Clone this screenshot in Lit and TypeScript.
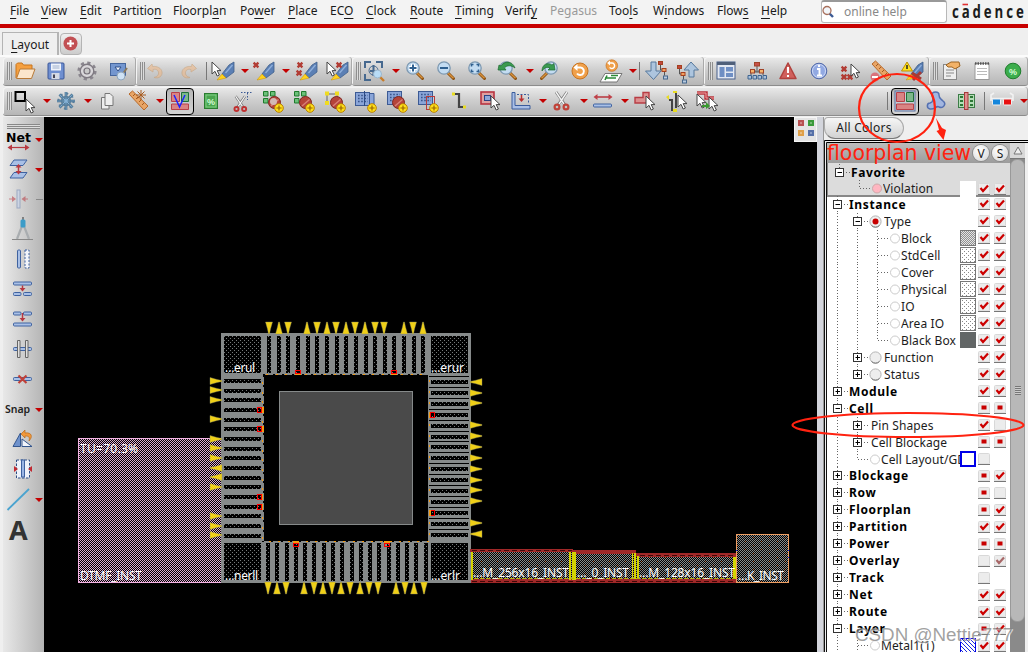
import { LitElement, html, svg, css } from "lit";
import { customElement, property } from "lit/decorators.js";

/* ---------- shared glyph parts, drawn in a 30x28 box ---------- */
const cursor = (x = 0, y = 0) => svg`<path transform="translate(${x} ${y})" d="M0 0V12L3 9.3L5.2 14L7.4 13L5.2 8.6H9Z" fill="#fff" stroke="#444" stroke-width="1"/>`;
const redX = (x: number, y: number, s = 1) => svg`<path transform="translate(${x} ${y}) scale(${s})" d="M-2.4-2.4L2.4 2.4M2.4-2.4L-2.4 2.4" stroke="#b23c34" stroke-width="2.3"/>`;
const pencil = svg`<path d="M24 5V15L16 21L12 17L19 8Z" fill="#5b7fb4" stroke="#3f5f8c" stroke-width=".8"/><path d="M22.500 8L15.500 16" stroke="#8fb0dc" stroke-width="1.300"/><path d="M12 17L16 21L12 22L7 23Z" fill="#ffd21e" stroke="#c89000" stroke-width=".5"/>`;
const lens = (inner: unknown) => svg`<path d="M17 16L22.500 21.500" stroke="#8a5010" stroke-width="3" stroke-linecap="round"/><path d="M17 16L22.500 21.300" stroke="#d8913c" stroke-width="1.400"/><circle cx="13" cy="11" r="6.200" fill="#c3dcf2" stroke="#7d98b0" stroke-width="1.300"/>${inner}`;
const plusBadge = svg`<circle cx="21" cy="21" r="4.300" fill="#ffe01a" stroke="#b98000" stroke-width="1"/><path d="M21 18.400V23.600M18.400 21H23.600" stroke="#9a6500" stroke-width="1.200"/>`;
const ball = svg`<circle cx="16.500" cy="15.500" r="6" fill="#b5443a" stroke="#7c2620" stroke-width="1"/><path d="M13 19L20.500 12.500" stroke="#d98078" stroke-width="1.400"/>`;
const greens = svg`<g fill="#6cc07a" stroke="#1f7a2c"><path d="M5.500 4.500h4.500v4.500h-4.500zM12.500 4.500h4.500v4.500h-4.500zM5.500 11.500h4.500v4.500h-4.500z"/></g>`;
const chipBlue = svg`<rect x="5.500" y="4.500" width="14" height="13" fill="#8aa5d8" stroke="#3c5a94"/><path d="M8 7.500H18M8 10.500H18M8 13.500H18" stroke="#39558c" stroke-width="1.600" stroke-dasharray="1.600 1.600"/>`;
const rulerBody = svg`<path d="M5 5L8.500 2L24 17L20 21Z" fill="#e8a566" stroke="#b8692a"/><path d="M9 7L11 5M12 10L14 8M15 13L17 11M18 16L20 14" stroke="#a35a20"/>`;
const panes = svg`<rect x="6" y="5" width="18" height="18" fill="#c8cdd4"/><path d="M6.500 5.500H14.500V14.500H6.500ZM6.500 17H23.500V22.500H6.500Z" fill="#d98484" stroke="#b84048"/><path d="M16.500 5.500H23.500V14.500H16.500Z" fill="#7db88c" stroke="#20703a"/>`;
const nodes = svg`<g fill="#f2a060" stroke="#a6401e"><rect x="16.500" y="4.500" width="4" height="3" fill="#c04840"/><rect x="20" y="11.500" width="4" height="3"/><rect x="21.500" y="19" width="4" height="3" fill="#b9cbe0" stroke="#44678c"/></g><path d="M18.500 8V13H20M22.500 15V18.500" fill="none" stroke="#555"/>`;
const bar = (y: number) => svg`<rect x="5.500" y="${y}" width="18" height="3" rx="1" fill="#a9c0e6" stroke="#3f62a0"/>`;
const halfBars = (y: number) => svg`<rect x="5.500" y="${y}" width="7.500" height="3" rx="1" fill="#a9c0e6" stroke="#3f62a0"/><rect x="15.500" y="${y}" width="8" height="3" rx="1" fill="#a9c0e6" stroke="#3f62a0"/>`;
const scissors = (b: string) => svg`<path d="M9 5L18 18M20 5L11 18" stroke="#777" stroke-width="2.800"/><path d="M9 5L17 17M20 5L12 17" stroke="#f4f4f4" stroke-width="1.400"/><g fill="none" stroke="${b}" stroke-width="2.200"><circle cx="10" cy="20" r="2.400"/><circle cx="19" cy="20" r="2.400"/></g>`;
const swirl = (c: string) => svg`<path d="M10 7L5.500 11.500L11 15V12.500C15 11.500 17 14 16.500 17C16 19 14 20 12 20.500C17 22 20.500 19 20 15C19.500 11 15 9 10.500 9.500Z" fill="${c}" stroke="#c79a6c" stroke-width=".8"/>`;
const roundArrow = svg`<circle cx="15" cy="14" r="8" fill="#f0a04a" stroke="#c87420"/><path d="M11 10.500H15.500A3.800 3.800 0 1 1 12 16.500" fill="none" stroke="#fff" stroke-width="2"/><path d="M8.500 10.500L12.500 7V14Z" fill="#fff"/>`;

const ICONS: Record<string, unknown> = {
  open: svg`<path d="M6 21V7.500L7.500 6H12L13.500 8H22V12" fill="#f5a040" stroke="#c8741c"/><path d="M6.500 21.500L10 12H25L21.500 21.500Z" fill="#fbe6cc" stroke="#b87a38"/>`,
  save: svg`<rect x="7" y="6" width="16" height="16" rx="1" fill="#6f8fd0" stroke="#3a5698"/><rect x="10" y="6.500" width="10" height="7" fill="#eef2fa"/><path d="M11.500 9H18.500M11.500 11H18.500" stroke="#9fb0cc"/><rect x="10.500" y="16" width="8" height="6" fill="#d5dae5"/><rect x="12" y="17.500" width="2" height="3.500" fill="#445"/>`,
  gear: svg`<circle cx="15" cy="14" r="8.300" fill="none" stroke="#8a868e" stroke-width="2.600" stroke-dasharray="3.200 3.320"/><circle cx="15" cy="14" r="6.800" fill="#d9d7da" stroke="#7f7a82" stroke-width="1.400"/><circle cx="15" cy="14" r="3" fill="#c9c9c9" stroke="#77727a" stroke-width="1.200"/>`,
  design: svg`<rect x="7.500" y="6.500" width="15" height="12" fill="#7396cf" stroke="#45669e"/><path d="M12 10H18L15 14Z" fill="#f4f8ff" stroke="#2e4f88"/><path d="M19 18L24 11" stroke="#8c7a5c" stroke-width="2"/><circle cx="18" cy="19" r="4" fill="#cfe2f5" stroke="#8fa6bd"/>`,
  undo: svg`<g opacity=".6">${swirl("#eeb98a")}</g>`,
  redo: svg`<g opacity=".6" transform="translate(29 0) scale(-1 1)">${swirl("#eeb98a")}</g>`,
  pick: svg`<g transform="translate(2 0)">${pencil}</g>${cursor(4, 5)}`,
  unpick: svg`<g transform="translate(1 0)">${pencil}</g>${redX(7, 8)}`,
  unpick2: svg`<g transform="translate(2 0)">${pencil}</g>${redX(9, 8)}${redX(8, 16)}`,
  pickx: svg`<g transform="translate(2 0)">${pencil}</g>${cursor(5, 5)}${redX(17, 8)}`,
  fit: svg`<path d="M6 11V5H12M17 5H23V11M6 17V23H12M11 14H18M14.500 8V19" fill="none" stroke="#47698f" stroke-width="2"/><circle cx="14.500" cy="13.500" r="4.500" fill="none" stroke="#47698f"/><path d="M20 19L25 24" stroke="#c87c28" stroke-width="2.400"/><circle cx="18.500" cy="17" r="4" fill="#b8dcf6" stroke="#9cb6cc"/>`,
  zin: lens(svg`<path d="M13 7V15M9 11H17" stroke="#fff" stroke-width="4"/><path d="M13 7.500V14.500M9.500 11H16.500" stroke="#2f6090" stroke-width="2"/>`),
  zout: lens(svg`<path d="M9 11H17" stroke="#2f6090" stroke-width="2.200"/>`),
  zsel: lens(svg`<path d="M9.500 9.500V7.500H11.500M14.500 7.500H16.500V9.500M9.500 12.500V14.500H11.500M14.500 14.500H16.500V12.500" fill="none" stroke="#2f6090" stroke-width="1.500"/>`),
  zprev: svg`${lens(svg``)}<path d="M10 13L5 13L6 8L8 9C11 4 19 3 22 11C18 8 14 8 11.500 11L13 13Z" fill="#3a9a50" stroke="#1e6a30" stroke-width=".7"/>`,
  znext: svg`<g transform="translate(30 0) scale(-1 1)">${lens(svg``)}</g><path d="M8 14C8 7 14 5 18 8L20 6.500L21 13L14 13L16 11C13 9.500 10 11 8 14Z" fill="#3a9a50" stroke="#1e6a30" stroke-width=".7"/>`,
  refresh: roundArrow,
  redraw: svg`<path d="M9 16.500H26L21 25H4Z" fill="#fff" stroke="#777"/><path d="M11 18.500L9 23M15 18.500H22M9 21H20" stroke="#2e8a3a" stroke-width="1.600"/><g transform="translate(5 -1.500) scale(.72)">${roundArrow}</g>`,
  down: svg`<path d="M9 5H14V14H19L11.500 22.500L3.500 14H9Z" fill="#adc5de" stroke="#56789c"/>${nodes}`,
  up: svg`<path d="M16 20H21V13H25.500L18 5L11 13H16Z" fill="#adc5de" stroke="#56789c"/><g transform="translate(-12 4)">${nodes}</g>`,
  layout: svg`<rect x="6" y="5" width="18" height="17" fill="#e3e8f2" stroke="#48608c"/><rect x="6" y="5" width="18" height="3" fill="#50607a"/><path d="M8.500 10H13.500V20H8.500ZM15 10H22V14.500H15ZM15 16H22V20H15Z" fill="#6f8fc4"/>`,
  tree: svg`<path d="M15 9V13M9 18V15H21V18M9 14H21" stroke="#555" fill="none"/><g stroke="#a14428"><rect x="12.500" y="5.500" width="5" height="3.500" fill="#c85048"/><rect x="8.500" y="12.500" width="4" height="3.500" fill="#f4b46c"/><rect x="17.500" y="12.500" width="4" height="3.500" fill="#f4b46c"/></g><path d="M6 18.500h3.500v3.500h-3.500zM11 18.500h3.500v3.500h-3.500zM16 18.500h3.500v3.500h-3.500zM21 18.500h3.500v3.500h-3.500z" fill="#a9c0da" stroke="#3e6490"/>`,
  warn: svg`<path d="M15 6L23 21.500H7Z" fill="#d0605c" stroke="#b0423e" stroke-width="1.500" stroke-linejoin="round"/><path d="M15 10V16M15 18V20" stroke="#fff" stroke-width="2"/>`,
  info: svg`<circle cx="15" cy="14" r="7.800" fill="#92a9e2" stroke="#5068a8"/><circle cx="15" cy="14" r="6.500" fill="none" stroke="#cfdaf6"/><path d="M13 12H15.500V18M13 18.500H18M15 8V10" stroke="#fff" stroke-width="1.900" fill="none"/>`,
  xsel: svg`${redX(9, 12)}${redX(9, 20)}${redX(15, 20)}${cursor(16, 7)}`,
  unrule: svg`<g transform="translate(1 2)">${rulerBody}</g><circle cx="9" cy="20" r="4.500" fill="#d8737c"/><rect x="6" y="19" width="6" height="2" fill="#fff"/>`,
  wpen: svg`<g transform="translate(2 0)">${pencil}</g><path d="M15 16L24 22M24 15L16 23" stroke="#a83a34" stroke-width="3"/><path d="M10 5L15.500 14H4.500Z" fill="#ffe21c" stroke="#c09000"/><path d="M10 8V12" stroke="#222" stroke-width="1.500"/>`,
  props: svg`<rect x="7.500" y="7.500" width="13" height="15" fill="#eee" stroke="#888"/><path d="M10 13H18M10 16H18M10 19H15" stroke="#888"/><path d="M10 8L15 5H23L24 9L19 12L16 10H12Z" fill="#f2b268" stroke="#9c6422"/>`,
  note: svg`<rect x="8" y="6.500" width="14" height="16" fill="#fff" stroke="#999"/><path d="M8 6.500H22" stroke="#555" stroke-width="2.500" stroke-dasharray="1.500 1"/><path d="M10 11.500H20M10 14.500H20M10 17.500H20" stroke="#bbb"/>`,
  pct: svg`<circle cx="15" cy="14" r="7.800" fill="#3cad4c" stroke="#1d7c2c"/><text x="11" y="17.500" class="pc">%</text>`,
  select: svg`<rect x="5.500" y="5" width="9.500" height="9" fill="none" stroke="#000" stroke-width="2"/>${cursor(16, 12)}`,
  flake: svg`<g stroke="#3b627f" stroke-width="2.600"><path d="M15 5V23M6 14H24M8.500 7.500L21.500 20.500M21.500 7.500L8.500 20.500"/></g><g stroke="#86b2d6" stroke-width="1.100"><path d="M15 5V23M6 14H24M8.500 7.500L21.500 20.500M21.500 7.500L8.500 20.500"/></g><g fill="none" stroke="#587f9d" stroke-width="1.300"><circle cx="15" cy="14" r="4.500"/><circle cx="15" cy="14" r="7.500" stroke-dasharray="2 3.900" stroke-width="2"/></g>`,
  copy: svg`<path d="M9.500 10.500H17V22H9.500Z" fill="#eee" stroke="#777"/><path d="M13 6.500H18L21 9.500V18.500H13Z" fill="#eee" stroke="#777"/>`,
  ruler: svg`<g transform="translate(1 2)">${rulerBody}</g><path d="M18 3V13M13 8H23M14.500 4.500L21.500 11.500M21.500 4.500L14.500 11.500" stroke="#a85c20"/>`,
  panesV: svg`${panes}<path d="M9 8L14.500 20L20 8" fill="none" stroke="#1a22ff" stroke-width="1.500"/>`,
  pctSq: svg`<rect x="8.500" y="6.500" width="13" height="15" fill="#4aa54e" stroke="#2a7c30"/><rect x="10" y="8" width="10" height="12" fill="none" stroke="#7fd083"/><text x="11" y="17.500" class="pc">%</text>`,
  cut: svg`<path d="M14 5.500H25M20.500 6V13" stroke="#3c5a94" stroke-dasharray="1.500 1.500" fill="none"/><g transform="translate(1 5) scale(.85)">${scissors("#c03030")}</g>`,
  g1: svg`${greens}${ball}<circle cx="15.500" cy="14.500" r="3.500" fill="#d3b8b4"/>${plusBadge}`,
  g2: svg`${greens}${ball}${plusBadge}`,
  g3: svg`<path d="M7 7H17V16M7 7V16" fill="none" stroke="#666"/><path d="M5 4.500h4v4h-4zM15 4.500h4v4h-4zM5 14h4v4h-4z" fill="#f0dc20"/>${ball}${plusBadge}`,
  c1: svg`<g transform="translate(-1 1)">${chipBlue}</g><path d="M19 6.500H23V17.500H19" stroke="#3c5a94" fill="#8aa5d8"/><path d="M13.500 4V19" stroke="#2c4a84"/>${plusBadge}`,
  c2: svg`${chipBlue}${ball}${plusBadge}`,
  c3: svg`${chipBlue}<rect x="13.500" y="9.500" width="8" height="13" fill="none" stroke="#b83c3c"/>${plusBadge}`,
  wire: svg`<path d="M10 7H15V20H20" fill="none" stroke="#444" stroke-width="2.200"/><path d="M8 5.500h3v3h-3zM19 18.500h3v3h-3z" fill="#e8dc20"/>`,
  rsel: svg`<rect x="6" y="5" width="13" height="12" fill="#dfa0a0" stroke="#b83440" stroke-width="1.600"/><rect x="9.500" y="8.500" width="6" height="5" fill="#8fa6d8" stroke="#2b4484"/>${cursor(16, 9)}`,
  edge: svg`<path d="M6 5.500H9V18.500H24V22H6Z" fill="#a9bfe6" stroke="#3a5c9c"/><path d="M11 7.500H22.500V17" fill="none" stroke="#3a5c9c" stroke-dasharray="2 1.500"/><path d="M15.500 8V12" stroke="#b83030" stroke-width="1.500"/><path d="M12.500 11.500H18.500L15.500 15Z" fill="#b83030"/>`,
  scis: scissors("#c04238"),
  space: svg`<path d="M7 10H23" stroke="#b8343c" stroke-width="1.500"/><path d="M9.500 7V13L5.500 10ZM20.500 7V13L24.500 10Z" fill="#c04048"/>${bar(17)}`,
  poly: svg`<path d="M13 5.500H19V16H5V10.500H13Z" fill="#dc9090" stroke="#b83c44" stroke-width="1.400"/>${cursor(16, 9)}`,
  wsel: svg`<path d="M8 13H11V23H15M15 6V21" fill="none" stroke="#444" stroke-width="2"/><path d="M5 10L8 8V13ZM12 4h4v2h-4zM12 22h4v3h-4z" fill="#e8dc20"/>${cursor(17, 8)}`,
  rtsel: svg`<path d="M5 6H14V11H22" fill="none" stroke="#b8343c" stroke-width="3.500"/><path d="M5 6H14V11H22" fill="none" stroke="#f0a0a0" stroke-width="1"/>${cursor(5, 7)}${cursor(17, 10)}<path d="M10 18H14V15L18 19L14 22V20H10Z" fill="#3a9a30"/>`,
  panes: svg`<rect x="5" y="4" width="20" height="20" fill="#c9d1dd" stroke="#5870a0"/>${panes}`,
  blob: svg`<path d="M11 8C11 4 18 4 18 8C18 12 20 12 22 14C26 17 22 22 18 20C15 18 14 23 9 22C5 21 6 16 9 16C13 15 12 11 11 8Z" fill="#a2b6e0" stroke="#5470b0" stroke-width="1.500"/>`,
  cols: svg`<rect x="6.500" y="7.500" width="16" height="13" fill="#b5ddb8" stroke="#3c7c46"/><path d="M9.500 9V19M19.500 9V19" stroke="#2d7836" stroke-width="3" stroke-dasharray="2 2"/><rect x="12.500" y="5.500" width="3.500" height="17" fill="#dd9090" stroke="#a83838"/>`,
  glasses: svg`<path d="M4 14V8L7 6M26 14V8L23 6M4 11.500H26" fill="none" stroke="#f2f2f2" stroke-width="1.600"/><rect x="5.500" y="12" width="8" height="6" rx="1" fill="#1486dc" stroke="#eee"/><rect x="16.500" y="12" width="8" height="6" rx="1" fill="#e81010" stroke="#eee"/>`,
  net: svg`<text x="1" y="17" class="netT">Net</text><path d="M5 22.500H22" stroke="#b83840" stroke-width="1.200"/><path d="M7 19.500V25.500L2.500 22.500ZM20 19.500V25.500L24.500 22.500Z" fill="#b83840"/>`,
  layers: svg`<path d="M9 5H22L18 10.500H5Z M9 17.500H22L18 23H5Z" fill="#a9c0e6" stroke="#3f62a0"/><path d="M13.500 11V18" stroke="#b83840" stroke-width="1.500"/><path d="M10.500 12.500L13.500 9L16.500 12.500ZM10.500 16L13.500 19.500L16.500 16Z" fill="#b83840"/>`,
  squeeze: svg`<g opacity=".55"><rect x="12" y="5" width="3" height="18" fill="#c6d4ee" stroke="#6e86b4"/><path d="M4 14H8M19 14H23" stroke="#b83840"/><path d="M7 11V17L11 14ZM20.500 11V17L16.500 14Z" fill="#b83840"/></g>`,
  compass: svg`<path d="M17 11L12 24M19 11L24 24" stroke="#a9adb0" stroke-width="2.200"/><path d="M7 24.500H28" stroke="#888"/><path d="M18 2V5" stroke="#666" stroke-width="1.500"/><rect x="15.500" y="4.500" width="5" height="8" rx="1.500" fill="#3c9cc8"/>`,
  vbars: svg`<rect x="12.500" y="5" width="3" height="18" rx="1" fill="#a9c0e6" stroke="#3f62a0"/><rect x="20" y="5" width="4" height="18" fill="#f2f5fb" stroke="#3f62a0" stroke-dasharray="2 1.500"/>`,
  split1: svg`<g transform="translate(3 0)">${bar(7)}${halfBars(17.5)}<path d="M14.500 10.500V14" stroke="#b83840" stroke-width="1.500"/><path d="M11.500 13H17.500L14.500 16.500Z" fill="#b83840"/></g>`,
  split2: svg`<g transform="translate(3 0)">${halfBars(7)}${bar(18)}<path d="M14.500 8V14" stroke="#b83840" stroke-width="1.500"/><path d="M11.500 13H17.500L14.500 16.500Z" fill="#b83840"/></g>`,
  cross: svg`<g transform="translate(3 0)">${bar(12.5)}<path d="M9.500 5.500h2.500v17h-2.500zM17.500 5.500h2.500v17h-2.500z" fill="#e0e0e0" stroke="#666"/></g>`,
  del: svg`<g transform="translate(3 0)">${bar(12.5)}<path d="M10.500 10.500L18.500 18M18.500 10.500L10.500 18" stroke="#c04038" stroke-width="2.200"/></g>`,
  snap: svg`<text x="0" y="18" class="snapT">Snap</text>`,
  mirror: svg`<path d="M8 21.500H15.500V8Z" fill="#6f92cc" stroke="#34568e"/><path d="M17 14L27 21.500H17Z" fill="#f2f5fb" stroke="#34568e"/><path d="M16 9L20 5V8C27 7 28 12 24 16C25 12 24 11 20 11V13Z" fill="#f0983c" stroke="#b86a1c" stroke-width=".7"/>`,
  stretch: svg`<rect x="11.500" y="5" width="13" height="18" fill="#eef2fa" stroke="#2f4f86" stroke-dasharray="2.500 1.500"/><rect x="16.500" y="5" width="3" height="17" fill="#9bb6e4" stroke="#3f62a0"/><path d="M9 11V17L13 14ZM27 11V17L23 14Z" fill="#c02830"/>`,
  line: svg`<path d="M2.500 25L24 4" stroke="#4aa3cf" stroke-width="1.800"/>`,
  textA: svg`<text x="4" y="25" class="bigA">A</text>`,
};

@customElement("tool-icon")
class ToolIcon extends LitElement {
  @property() name = "";
  static styles = css`
    :host { display: block; width: 31px; height: 28px; flex: none; }
    svg { display: block; width: 30px; height: 28px; overflow: visible; }
    .pc { font: bold 9px "Liberation Sans", sans-serif; fill: #d9ffd9; }
    .netT { font: bold 12.5px "DejaVu Sans", sans-serif; fill: #000; }
    .snapT { font: 600 10.5px "Noto Sans", sans-serif; fill: #222; }
    .bigA { font: bold 27px "Noto Sans", sans-serif; fill: #333; }
  `;
  render() {
    return html`<svg viewBox="0 0 30 28">${ICONS[this.name]}</svg>`;
  }
}

/* "v" is a drop-down arrow, "|" a separator, a leading "*" marks a pressed tool */
const BAR1 = [
  { w: 132.5, items: "open save gear design" },
  { w: 216.5, items: "undo redo | pick v unpick v unpick2 pickx" },
  { w: 352, items: "fit v zin zout zsel zprev v znext refresh redraw v | down up" },
  { w: 225, items: "layout tree warn info xsel unrule wpen" },
  { w: 99, items: "props note pct" },
];
const BAR2 = "select v flake v copy ruler v *panesV pctSq cut g1 g2 g3 c1 c2 c3 wire rsel edge v scis v space v poly wsel rtsel > | *panes blob cols | glasses v";

@customElement("tool-group")
class ToolGroup extends LitElement {
  @property() items = "";
  static styles = css`
    :host { display: flex; align-items: center; height: 29px; box-sizing: border-box; overflow: hidden; background: linear-gradient(#eaeaea, #cfcfcf 45%, #b6b6b6); border-bottom: 1px solid #8c8c8c; border-radius: 3px; box-shadow: inset -1px 0 #aaa, inset 1px 1px #f4f4f4; }
    .grip { flex: none; width: 5px; height: 18px; margin: 0 -2.5px 0 4px; background: repeating-linear-gradient(90deg, #8e8e8e 0 1px, #dcdcdc 1px 2px); }
    .tri { flex: none; width: 0; border: 4px solid transparent; border-top-color: #c40000; border-bottom: 0; margin: 0 .4px 0 2px; }
    .sep { flex: none; width: 1px; height: 18px; background: #777; margin: 0 1.5px; }
    .on { flex: none; margin: 0 2px 0 1px; width: 26px; height: 25px; border: 1px solid #000; border-radius: 4px; background: linear-gradient(#b5b5b5, #d4d4d4); display: flex; justify-content: center; align-items: center; }
    .on tool-icon { margin-right: -1px; }
    .grow { flex: 1; }
  `;
  render() {
    return html`<div class="grip"></div>${this.items.split(" ").map((n) =>
      n === "v" ? html`<div class="tri"></div>`
      : n === "|" ? html`<div class="sep"></div>`
      : n === ">" ? html`<div class="grow"></div>`
      : n[0] === "*" ? html`<div class="on"><tool-icon name=${n.slice(1)}></tool-icon></div>`
      : html`<tool-icon name=${n}></tool-icon>`)}`;
  }
}

/* ---------- floorplan canvas ---------- */
const range = (n: number, from: number, step: number) => Array.from({ length: n }, (_, i) => from + i * step);
const TOP = range(17, 269, 9.65);
const BOT = range(18, 268, 9.28);
const LEFT = range(17, 381, 9.67);
const RIGHT = range(15, 382, 10.9);
const pinV = (x: number, y: number, down: boolean) => down
  ? svg`<path d="M${x - 3.5} ${y}h7l-2 7l-1 5h-1l-1-5z" class="pin"/>`
  : svg`<path d="M${x - 0.5} ${y}h1l1 5l2 7h-7l2-7z" class="pin"/>`;
const pinH = (x: number, y: number, right: boolean) => right
  ? svg`<path d="M${x} ${y - 3.5}v7l7-2l5-1v-1l-5-1z" class="pin"/>`
  : svg`<path d="M${x + 12} ${y - 3.5}v7l-7-2l-5-1v-1l5-1z" class="pin"/>`;
const TOP_PINS = "269d 279u 288d 307u 317d 327u 336d 346u 355d 365u 375d 384d 404u 413d 423u";
const BOT_PINS = "268d 277u 286d 304u 314d 323u 332d 341u 350d 360u 369d 378d 396u 405d 414u 424d";
const LEFT_PINS = "381r 390r 400r 419r 439r 448r 458r 468l 477l 487r 516r 526r 535r";
const RIGHT_PINS = "382l 393r 403r 425r 436r 447r 458r 469r 480r 490r 501r 523r 534l";
const pins = (s: string, f: (n: number, d: string) => unknown) => s.split(" ").map((p) => f(parseInt(p), p.slice(-1)));

@customElement("floor-canvas")
class FloorCanvas extends LitElement {
  static styles = css`
    :host { display: block; width: 773px; background: #000; }
    svg { display: block; width: 773px; height: 535px; }
    .crisp { shape-rendering: crispEdges; }
    .pin { fill: #f0d018; stroke: #8a8a60; stroke-width: .4; }
    text { font: 12px "Noto Sans", sans-serif; fill: #fff; }
  `;
  render() {
    return html`<svg viewBox="44 117 773 535">
      <defs>
        <pattern id="pink" width="2" height="2" patternUnits="userSpaceOnUse"><path d="M0 0h1v1h-1zM1 1h1v1h-1z" fill="#dcaad0" class="crisp"/></pattern>
        <pattern id="gray" width="2" height="2" patternUnits="userSpaceOnUse"><path d="M0 0h1v1h-1zM1 1h1v1h-1z" fill="#868a8a" class="crisp"/></pattern>
        <pattern id="dots" width="4" height="4" patternUnits="userSpaceOnUse"><rect width="4" height="4" fill="#000"/><path d="M0 0h1v1h-1zM2 2h1v1h-1z" fill="#767a7a" class="crisp"/></pattern>
        <pattern id="rust" width="16" height="8" patternUnits="userSpaceOnUse"><path d="M1 1h1v1h-1zM9 5h1v1h-1z" fill="#c07040" class="crisp"/></pattern>
      </defs>
      <g class="crisp">
        <rect x="78" y="438" width="145" height="145" fill="url(#pink)"/>
        <rect x="78.500" y="438.500" width="144" height="144" fill="none" stroke="#f5b4e4"/>
        <rect x="221" y="333" width="250" height="250" fill="#868a8a"/>
        <rect x="264" y="375" width="164" height="166" fill="#000"/>
        ${[[224, 336], [431, 336], [224, 543], [431, 543]].map(([x, y]) => svg`<rect x=${x} y=${y} width="37" height="37" fill="url(#dots)"/>`)}
        ${TOP.map((x) => svg`<rect x=${Math.round(x) - 2} y="336" width="4" height="37" fill="url(#dots)"/><rect x=${Math.round(x) - 6} y="374" width="2" height="1" fill="#000"/><rect x=${Math.round(x) - 3} y="374" width="2" height="1" fill="#f59a10"/>`)}
        ${BOT.map((x) => svg`<rect x=${Math.round(x) - 2} y="543" width="4" height="38" fill="url(#dots)"/><rect x=${Math.round(x) - 6} y="541" width="2" height="1" fill="#000"/><rect x=${Math.round(x) + 1} y="541" width="2" height="1" fill="#f59a10"/>`)}
        ${LEFT.map((y) => svg`<rect x="224" y=${Math.round(y) - 2} width="37" height="4" fill="url(#dots)"/><rect x="263" y=${Math.round(y) - 6} width="1" height="2" fill="#000"/><rect x="262" y=${Math.round(y) + 1} width="1" height="2" fill="#f59a10"/>`)}
        ${RIGHT.map((y) => svg`<rect x="431" y=${Math.round(y) - 2} width="37" height="4" fill="url(#dots)"/><rect x="429" y=${Math.round(y) - 6} width="40" height="1" fill="#000"/><rect x="429" y=${Math.round(y) - 2} width="1" height="2" fill="#f59a10"/>`)}
        <g fill="none" stroke="#f00">
          <rect x="295.500" y="370.500" width="5" height="3"/><rect x="391.500" y="370.500" width="5" height="3"/>
          <rect x="293.500" y="543.500" width="5" height="3"/><rect x="384.500" y="543.500" width="5" height="3"/>
          <rect x="257.500" y="407.500" width="4" height="5"/><rect x="257.500" y="426.500" width="4" height="5"/>
          <rect x="257.500" y="494.500" width="4" height="5"/><rect x="257.500" y="504.500" width="4" height="5"/>
          <rect x="430.500" y="412.500" width="4" height="5"/><rect x="430.500" y="510.500" width="4" height="5"/>
        </g>
        <path d="M295 374h6v1h-6zM391 374h6v1h-6zM293 541h6v2h-6zM384 541h6v2h-6zM262 407h2v6h-2zM262 426h2v6h-2zM262 494h1v6h-1zM262 504h1v6h-1zM429 412h1v6h-1zM429 510h2v6h-2z" fill="#f59a10"/>
        <rect x="279.500" y="391.500" width="133" height="133" fill="#4a4a4a" stroke="#868a8a"/>

        <rect x="471" y="552" width="265" height="28" fill="url(#gray)"/><rect x="471" y="552" width="265" height="28" fill="url(#rust)"/>
        <rect x="635" y="550" width="102" height="3" fill="#000"/>
        <path d="M470 549h103v3h-103zM573 550h63v4h-63zM636 553h101v4h-101zM471 579h266v4h-266z" fill="#a02828"/>
        <path d="M472 550.500H572M640 555.500H735M472 581.500H736M575 578.500H634" stroke="#400808" stroke-dasharray="5 3"/>
        <path d="M471 552h2v28h-2zM569 552h2v28h-2zM572 552h4v28h-4zM632 553h1v26h-1zM634 553h2v26h-2zM637 556h2v23h-2zM733 557h4v22h-4z" fill="#d4d400"/>
        <path d="M474 578.500H735" stroke="#b8b810" stroke-dasharray="4 2"/>
        <rect x="736.500" y="534.500" width="52" height="48" fill="#000"/>
        <rect x="736.500" y="534.500" width="52" height="48" fill="url(#gray)"/>
        <rect x="736.500" y="534.500" width="52" height="48" fill="url(#rust)" stroke="#ee9e62"/>
        <path d="M736 550h1v1h-1zM788 550h1v1h-1zM788 557h1v1h-1z" fill="#22f"/>
      </g>
      ${pins(TOP_PINS, (n, d) => pinV(n, 322, d === "d"))}
      ${pins(BOT_PINS, (n, d) => pinV(n, 582, d === "d"))}
      ${pins(LEFT_PINS, (n, d) => pinH(210, n, d === "r"))}
      ${pins(RIGHT_PINS, (n, d) => pinH(470, n, d === "r"))}
      <text x="80" y="453" textLength="58">TU=70.3%</text>
      <text x="80" y="580" textLength="62">DTMF_INST</text>
      <text x="225" y="372" textLength="30">…erul</text>
      <text x="431" y="372" textLength="33">…erur</text>
      <text x="225" y="580" textLength="33">…nerll</text>
      <text x="431" y="580" textLength="29">…erlr</text>
      <text x="473" y="577" textLength="96">…M_256x16_INST</text>
      <text x="577" y="577" textLength="52">…_0_INST</text>
      <text x="639" y="577" textLength="96">…M_128x16_INST</text>
      <text x="738" y="580" textLength="46">…K_INST</text>
      <g><rect x="794" y="117" width="23" height="25" fill="#e4e4e4"/><rect x="794.500" y="117.500" width="22" height="24" fill="none" stroke="#f6f6f6"/><rect x="798" y="120" width="6" height="6" fill="#b85050"/><rect x="808" y="120" width="6" height="6" fill="#3a9a3a"/><rect x="798" y="130" width="6" height="6" fill="#e0a048"/><rect x="808" y="130" width="6" height="6" fill="#5570a8"/><path d="M800 122h2v2h-2zM810 122h2v2h-2zM800 132h2v2h-2zM810 132h2v2h-2z" fill="#fff" opacity=".3"/></g>
    </svg>`;
  }
}

/* ---------- colour tree ---------- */
/* d: depth, e: expander, r: radio kind, sw: swatch, v/s: c=check p=partial b=blank f=faded */
type Row = { t: string; d: number; e?: string; r?: string; sw?: string; v?: string; s?: string; last?: boolean; g?: number[] };
const FAV: Row[] = [
  { t: "Favorite", d: 0, e: "-", last: true },
  { t: "Violation", d: 1, r: "pink", sw: "white", v: "c", s: "c", last: true },
];
const ROWS: Row[] = [
  { t: "Instance", d: 0, e: "-", v: "c", s: "c" },
  { t: "Type", d: 1, e: "-", r: "on", v: "c", s: "c" },
  { t: "Block", d: 2, r: "o", sw: "dense", v: "c", s: "c", g: [1] },
  { t: "StdCell", d: 2, r: "o", sw: "dot", v: "c", s: "c", g: [1] },
  { t: "Cover", d: 2, r: "o", sw: "dot", v: "c", s: "c", g: [1] },
  { t: "Physical", d: 2, r: "o", sw: "dot", v: "c", s: "c", g: [1] },
  { t: "IO", d: 2, r: "o", sw: "dot", v: "c", s: "c", g: [1] },
  { t: "Area IO", d: 2, r: "o", sw: "dot", v: "c", s: "c", g: [1] },
  { t: "Black Box", d: 2, r: "o", sw: "solid", v: "c", s: "c", g: [1], last: true },
  { t: "Function", d: 1, e: "+", r: "off", v: "c", s: "c" },
  { t: "Status", d: 1, e: "+", r: "off", v: "c", s: "c", last: true },
  { t: "Module", d: 0, e: "+", v: "c", s: "c" },
  { t: "Cell", d: 0, e: "-", v: "p", s: "p" },
  { t: "Pin Shapes", d: 1, e: "+", v: "c", s: "b" },
  { t: "Cell Blockage", d: 1, e: "+", v: "p", s: "p" },
  { t: "Cell Layout/GDS", d: 1, r: "o", sw: "blue", v: "b", last: true },
  { t: "Blockage", d: 0, e: "+", v: "p", s: "c" },
  { t: "Row", d: 0, e: "+", v: "p", s: "b" },
  { t: "Floorplan", d: 0, e: "+", v: "p", s: "c" },
  { t: "Partition", d: 0, e: "+", v: "c", s: "c" },
  { t: "Power", d: 0, e: "+", v: "p", s: "p" },
  { t: "Overlay", d: 0, e: "+", v: "b", s: "f" },
  { t: "Track", d: 0, e: "+", v: "b" },
  { t: "Net", d: 0, e: "+", v: "c", s: "c" },
  { t: "Route", d: 0, e: "+", v: "c", s: "c" },
  { t: "Layer", d: 0, e: "-", v: "p", s: "c" },
  { t: "Metal1(1)", d: 1, r: "o", sw: "hatch", v: "c", s: "c" },
];

@customElement("color-tree")
class ColorTree extends LitElement {
  static styles = css`
    :host { display: flex; flex-direction: column; width: 183px; height: 509px; overflow: hidden; background: #fff; }
    .head { flex: none; height: 20px; background: linear-gradient(#bdbdbd, #9c9c9c); display: flex; justify-content: flex-end; align-items: center; gap: 1px; padding-right: 1px; }
    .vs { width: 16px; height: 16px; border-radius: 50%; background: radial-gradient(circle at 40% 35%, #fff, #d4d4d4); box-shadow: 0 0 0 1px #8a8a8a; font: 12px/17px "Noto Sans", sans-serif; text-align: center; margin: 0 1px; }
    .fav { flex: none; box-sizing: border-box; background: #dcdcdc; border-bottom: 2px solid #888; height: 34px; margin-bottom: -1px; padding: 1px 0 0 2px; box-shadow: inset 1px 0 #888; }
    .row { display: flex; align-items: center; height: 16.98px; flex: none; font: 12px/17px "Noto Sans", sans-serif; color: #1c1c1c; }
    .fav .row { height: 16.5px; }
    .label { flex: 1; min-width: 0; white-space: nowrap; overflow: hidden; letter-spacing: .1px; }
    .b { font-weight: 700; letter-spacing: .65px; color: #000; }
    svg { display: block; flex: none; }
    .g { stroke: #666; stroke-dasharray: 1 2; fill: none; shape-rendering: crispEdges; }
    .sw { flex: none; box-sizing: border-box; width: 16px; height: 16px; }
    .white { background: #fff; }
    .dense { border: 1px solid #777; background: repeating-conic-gradient(#909090 0 25%, #e4e4e4 0 50%) 0 0/2px 2px; }
    .dot { border: 1px solid #777; background: radial-gradient(circle at .5px .5px, #888 .6px, transparent .6px) 1px 1px/4px 4px, radial-gradient(circle at .5px .5px, #888 .6px, transparent .6px) 3px 3px/4px 4px; }
    .solid { background: #626666; }
    .blue { border: 2px solid #0000e8; }
    .hatch { border: 1px solid #0000e8; background: repeating-linear-gradient(45deg, #fff 0 1.8px, #1a2ae0 1.8px 2.8px); }
    .ck { flex: none; width: 12px; height: 12px; margin: 0 2px; }
    .tail { flex: none; width: 2px; }
  `;
  guide(r: Row) {
    const x = 10.5 + r.d * 20;
    const hasBtn = r.r === "on" || r.r === "off";
    const w = r.e ? (hasBtn ? 57 : r.d ? 44 : 22) : r.d === 2 ? 74 : 54;
    return svg`<svg width=${w} height="17" viewBox="0 0 ${w} 17">
      ${r.d > 0 && r.r !== "pink" ? svg`<path class="g" d="M10.500 0V17"/>` : ""}
      ${(r.g ?? []).map((d) => svg`<path class="g" d="M${10.5 + d * 20} 0V17"/>`)}
      <path class="g" d="M${x} 0V${r.last ? 9 : 17}M${x} 8.500H${x + 10}"/>
      ${r.e ? svg`<rect x=${x - 4} y="4.500" width="8" height="8" fill="#fff" stroke="#333" shape-rendering="crispEdges"/><path d="M${x - 2} 8.500H${x + 2.5}${r.e === "+" ? `M${x} 6V11` : ""}" stroke="#000"/>` : ""}
      ${hasBtn ? svg`<circle cx="48.500" cy="8.500" r="5.600" fill="#eee" stroke="#b4b4b4"/><path d="M44.500 12.500A5.500 5.500 0 0 0 52.500 12.500" fill="none" stroke="#777"/>${r.r === "on" ? svg`<circle cx="48.500" cy="8.500" r="3" fill="#c80000"/>` : ""}` : ""}
      ${r.r === "o" || r.r === "pink" ? svg`<circle cx=${w - 6} cy="8.500" r="4.500" fill=${r.r === "pink" ? "#ffb6c1" : "#fff"} stroke=${r.r === "pink" ? "#caa" : "#ccc"}/>` : ""}
    </svg>`;
  }
  check(k?: string) {
    return html`<svg class="ck" viewBox="0 0 12 12">${k ? svg`<rect x=".5" y=".5" width="11" height="10.500" rx="1" fill="#ececec" stroke="#d8d8d8"/><path d="M0 11.500H12" stroke="#777"/>` : ""}
      ${k === "c" || k === "f" ? svg`<path d="M2.500 5L5 8L10 2.500" fill="none" stroke=${k === "c" ? "#cc0000" : "#a86868"} stroke-width="2.200"/>` : ""}
      ${k === "p" ? svg`<rect x="3.500" y="3.500" width="5" height="4" fill="#c80000"/>` : ""}</svg>`;
  }
  row(r: Row) {
    return html`<div class="row">${this.guide(r)}<div class="label ${r.d ? "" : "b"}">${r.t}</div>${r.sw ? html`<div class="sw ${r.sw}"></div>` : ""}${this.check(r.v)}${this.check(r.s)}<div class="tail"></div></div>`;
  }
  render() {
    return html`<div class="head"><div class="vs">V</div><div class="vs">S</div></div>
      <div class="fav">${FAV.map((r) => this.row(r))}</div>${ROWS.map((r) => this.row(r))}`;
  }
}

const MENU: [string, number, number][] = [
  ["File", 0, 31], ["View", 0, 39], ["Edit", 0, 33], ["Partition", 8, 60], ["Floorplan", 7, 67], ["Power", 2, 48], ["Place", 0, 42],
  ["ECO", 2, 36], ["Clock", 0, 44], ["Route", 0, 45], ["Timing", 0, 50], ["Verify", 5, 45], ["Pegasus", -1, 59], ["Tools", 3, 44],
  ["Windows", 1, 64], ["Flows", 4, 44], ["Help", 0, 60],
];
const SIDE = ["net v", "layers v", "squeeze -", "compass", "vbars", "split1", "split2", "cross", "del", "snap v", "mirror", "stretch", "line v", "textA"];

@customElement("app-root")
class AppRoot extends LitElement {
  static styles = css`
    :host { display: flex; flex-direction: column; position: relative; width: 1028px; height: 652px; overflow: hidden; background: #efefef; font: 12px "Noto Sans", sans-serif; color: #1a1a1a; }
    .menu { flex: none; height: 24px; display: flex; padding-left: 10px; background: #f3f3f3; }
    .mi { flex: none; line-height: 22px; white-space: nowrap; }
    .mi u { text-underline-offset: 3px; }
    .dim { color: #999; }
    .search { flex: none; box-sizing: border-box; width: 126px; height: 23px; background: #fff; border: 1px solid #b8b8b8; border-top: 2px solid #999; border-radius: 3px; display: flex; align-items: center; gap: 10px; color: #888; line-height: 19px; }
    .search span { padding-bottom: 2px; }
    .logo { flex: none; margin-left: 5px; }
    .logo svg { display: block; }
    .logo text { font: bold 17px "Open Sans", sans-serif; fill: #1c1c1c; }
    .red { flex: none; height: 4px; background: #c80000; }
    .tabs { flex: none; height: 29px; display: flex; padding: 4px 0 0 2px; box-sizing: border-box; border-bottom: 2px solid #fbfbfb; }
    .tab { box-sizing: border-box; width: 57px; border: 1px solid #b4b4b4; border-width: 1px 2px 0 1px; padding-left: 8px; line-height: 24px; }
    .tab u { text-underline-offset: 3px; }
    .add { margin: 1px 0 0 1px; width: 20px; height: 20px; border: 1px solid #b4b4b4; border-radius: 4px; background: linear-gradient(#f0f0f0, #ccc); }
    .bar { flex: none; display: flex; height: 29px; padding-left: 3px; margin-bottom: 1px; }
    .main { flex: none; display: flex; height: 535px; }
    .side { flex: none; box-sizing: border-box; width: 41px; margin-left: 3px; background: linear-gradient(90deg, #e8e8e8, #b4b4b4); padding-top: 7px; }
    .slot { height: 30px; display: flex; align-items: center; padding-left: 2px; }
    .grip { height: 5px; width: 33px; margin: 0 0 -5px 4px; background: repeating-linear-gradient(#888 0 1px, #ddd 1px 2px); }
    .tri { width: 0; border: 4px solid transparent; border-top-color: #c40000; border-bottom: 0; margin-top: 2px; margin-left: -1px; }
    .dash { width: 7px; height: 1px; background: #888; }
    .split { flex: none; width: 6px; border-right: 1px solid #999; background: #d3d5dc; }
    .right { flex: none; width: 204px; display: flex; flex-direction: column; background: #efefef; }
    .all { box-sizing: border-box; width: 80px; height: 22px; border: 1px solid #aaa; border-bottom-color: #777; border-radius: 4px 11px 11px 11px; background: linear-gradient(#f6f6f6, #d2d2d2); line-height: 20px; text-align: center; letter-spacing: .25px; }
    .frame { display: flex; margin-top: 1px; height: 512px; box-sizing: border-box; border-top: 3px double #000; border-left: 3px double #111; }
    .scroll { width: 15px; flex: none; background: #8a8a8a; display: flex; flex-direction: column; }
    .upb { flex: none; height: 16px; background: #d8d8d8; display: flex; align-items: center; justify-content: center; border-bottom: 1px solid #777; box-sizing: border-box; }
    .thumb { flex: none; height: 463px; box-sizing: border-box; border: 1px solid #999; border-radius: 7px; background: #b8b8b8; display: flex; align-items: center; justify-content: center; }
    .thumb div { width: 6px; height: 9px; background: repeating-linear-gradient(#777 0 1px, #ccc 1px 2px); }
    .notes { position: absolute; left: 0; top: 0; width: 1028px; height: 652px; pointer-events: none; }
    .big { font: 20.5px "DejaVu Sans", sans-serif; fill: #ff2210; }
    .mark { font: 18px "Liberation Sans", sans-serif; fill: rgba(130, 130, 130, .75); text-shadow: 1px 1px 0 rgba(255, 255, 255, .8); }
  `;
  label(t: string, i: number) {
    return i < 0 ? t : html`${t.slice(0, i)}<u>${t[i]}</u>${t.slice(i + 1)}`;
  }
  render() {
    return html`
      <div class="menu">
        ${MENU.map(([t, i, w]) => html`<div class="mi ${i < 0 ? "dim" : ""}" style="width:${w}px">${this.label(t, i)}</div>`)}
        <div class="search"><svg width="12" height="14" viewBox="0 0 12 14"><path d="M7 8L11 12" stroke="#3c5a94" stroke-width="2.400"/><circle cx="5" cy="5.500" r="4" fill="#f2f6fa" stroke="#a8705c" stroke-width="1.300"/></svg><span>online help</span></div>
        <div class="logo"><svg width="76" height="24"><g transform="scale(.78 1)"><text x="0" y="17.500" textLength="92" lengthAdjust="spacing">cadence</text></g><path d="M10.500 4.500H16" stroke="#e03030" stroke-width="1.600"/></svg></div>
      </div>
      <div class="red"></div>
      <div class="tabs"><div class="tab">${this.label("Layout", 0)}</div>
        <div class="add"><svg width="20" height="20"><circle cx="9.500" cy="9.500" r="7" fill="#c25054"/><path d="M9.500 6V13M6 9.500H13" stroke="#fff" stroke-width="2"/></svg></div></div>
      <div class="bar">${BAR1.map((g) => html`<tool-group style="width:${g.w}px" items=${g.items}></tool-group>`)}</div>
      <div class="bar"><tool-group style="width:1025px" items=${BAR2}></tool-group></div>
      <div class="main">
        <div class="side"><div class="grip"></div>
          ${SIDE.map((s) => { const [n, m] = s.split(" "); return html`<div class="slot"><tool-icon name=${n}></tool-icon>${m === "v" ? html`<div class="tri"></div>` : m ? html`<div class="dash"></div>` : ""}</div>`; })}
        </div>
        <floor-canvas></floor-canvas>
        <div class="split"></div>
        <div class="right">
          <div class="all">All Colors</div>
          <div class="frame"><color-tree></color-tree>
            <div class="scroll"><div class="upb"><svg width="10" height="9"><path d="M5 1L9 8H1Z" fill="#eee" stroke="#777"/></svg></div><div class="thumb"><div></div></div></div>
          </div>
        </div>
      </div>
      <svg class="notes" viewBox="0 0 1028 652">
        <g fill="none" stroke="#ff2210" stroke-width="2.200"><ellipse cx="897" cy="108" rx="38" ry="34"/><ellipse cx="908" cy="425" rx="115.500" ry="12"/></g>
        <path d="M936 118L942 128L946 130L943.500 140L936.500 131L939 130Z" fill="#ff2210"/>
        <text x="827" y="160" textLength="144" lengthAdjust="spacingAndGlyphs" class="big">floorplan view</text>
        <text x="855" y="641" textLength="158" lengthAdjust="spacingAndGlyphs" class="mark">CSDN @Nettie777</text>
      </svg>`;
  }
}
